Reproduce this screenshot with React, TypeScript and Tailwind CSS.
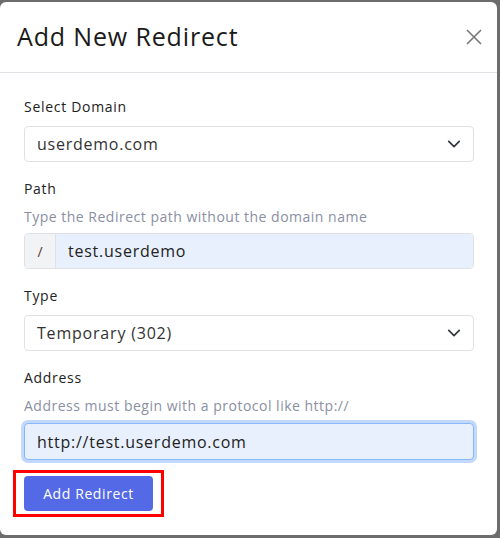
import React from 'react'

const Chevron = () => (
  <svg width="14" height="14" viewBox="0 0 16 16" fill="none" stroke="#343a40" strokeWidth="2" strokeLinecap="round" strokeLinejoin="round">
    <path d="M2 5l6 6 6-6" />
  </svg>
)

const App = () => {
  return (
    <div className="w-[500px] h-[538px] bg-[#6c6c6c] pt-[2px] pr-[3px] pb-[3px] font-['Open_Sans',sans-serif]">
      <div className="h-full bg-white rounded-[6px] flex flex-col">
        {/* header */}
        <div className="h-[71px] flex items-center justify-between pl-[17px] pr-[15px] border-b border-[#dee2e6]">
          <h1 className="text-[25px] text-[#1a1a1a] tracking-[0.85px]">Add New Redirect</h1>
          <svg width="16" height="16" viewBox="0 0 16 16" stroke="#777" strokeWidth="1.6">
            <path d="M1 1l14 14M15 1L1 15" />
          </svg>
        </div>

        {/* body */}
        <div className="pl-[24px] pr-[23px] pt-[24px] flex flex-col">
          <label className="text-[14px] text-[#222] font-medium leading-[20px] tracking-[0.7px]">Select Domain</label>
          <div className="mt-[9px] h-[36px] border border-[#dee2e6] rounded-[4px] flex items-center justify-between pl-[12px] pr-[12px]">
            <span className="text-[16px] text-[#333] tracking-[0.75px]">userdemo.com</span>
            <Chevron />
          </div>

          <label className="mt-[17px] text-[14px] text-[#222] font-medium leading-[20px] tracking-[0.7px]">Path</label>
          <p className="mt-[8px] text-[14px] text-[#8a8fa3] leading-[20px] tracking-[0.5px]">Type the Redirect path without the domain name</p>
          <div className="mt-[6px] h-[36px] flex rounded-[4px] border border-[#dee2e6] overflow-hidden">
            <div className="w-[31px] bg-[#f1f3f5] border-r border-[#dee2e6] flex items-center justify-center text-[14px] text-[#5a3a2a]">/</div>
            <div className="flex-1 bg-[#e8f0fe] flex items-center pl-[12px] text-[16px] text-[#222] tracking-[0.75px]">test.userdemo</div>
          </div>

          <label className="mt-[17px] text-[14px] text-[#222] font-medium leading-[20px] tracking-[0.7px]">Type</label>
          <div className="mt-[9px] h-[36px] border border-[#dee2e6] rounded-[4px] flex items-center justify-between pl-[12px] pr-[12px]">
            <span className="text-[16px] text-[#333] tracking-[0.8px]">Temporary (302)</span>
            <Chevron />
          </div>

          <label className="mt-[17px] text-[14px] text-[#222] font-medium leading-[20px] tracking-[0.7px]">Address</label>
          <p className="mt-[8px] text-[14px] text-[#8a8fa3] leading-[20px] tracking-[0.5px]">Address must begin with a protocol like http://</p>
          <div className="mt-[7px] h-[37px] rounded-[4px] border border-[#86b7fe] bg-[#e8f0fe] ring-[3px] ring-[#c2d8fc] flex items-center pl-[12px] text-[16px] text-[#222] tracking-[0.75px]">
            http://test.userdemo.com
          </div>

          <div className="mt-[10px] ml-[-11px] w-[151px] h-[47px] border-[3px] border-[#ff0000] flex items-center justify-center">
            <button className="w-[129px] h-[35px] bg-[#5469e6] rounded-[4px] text-white text-[14px] font-medium tracking-[0.6px]">Add Redirect</button>
          </div>
        </div>
      </div>
    </div>
  )
}

export default App
